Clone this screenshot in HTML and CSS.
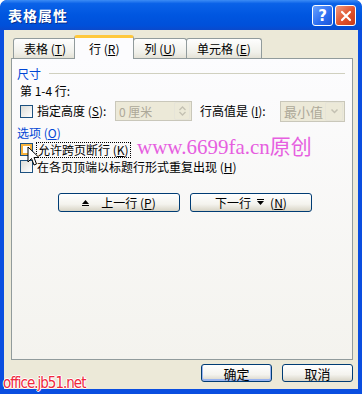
FILE: index.html
```html
<!DOCTYPE html>
<html lang="zh-CN">
<head>
    <meta charset="UTF-8">
    <title>表格属性</title>
    <link rel="stylesheet" href="styles.css">
</head>
<body>
    <div class="window">
        <div class="titlebar">
            <span class="title">表格属性</span>
            <div class="title-buttons">
                <span class="tb-btn tb-help">?</span>
                <span class="tb-btn tb-close">
                    <svg width="12" height="12" viewBox="0 0 12 12"><path d="M2 2 L10 10 M10 2 L2 10" stroke="#fff" stroke-width="2.2" stroke-linecap="round"/></svg>
                </span>
            </div>
        </div>
        <div class="client">
            <div class="tabs">
                <div class="tab">表格 (<u>T</u>)</div>
                <div class="tab active">行 (<u>R</u>)</div>
                <div class="tab">列 (<u>U</u>)</div>
                <div class="tab">单元格 (<u>E</u>)</div>
            </div>
            <div class="panel">
                <div class="group-title"><span>尺寸</span><span class="rule"></span></div>
                <div class="line indent">第 1-4 行:</div>
                <div class="line size-row">
                    <span class="check"></span>
                    <span class="label first">指定高度 (<u>S</u>):</span>
                    <span class="field">
                        <span class="field-text">0 厘米</span>
                        <span class="spin">
                            <svg width="9" height="12" viewBox="0 0 9 12"><path d="M1.5 5 L4.5 2 L7.5 5 M1.5 7 L4.5 10 L7.5 7" fill="none" stroke="#c3c0b2" stroke-width="1.3"/></svg>
                        </span>
                    </span>
                    <span class="label second">行高值是 (<u>I</u>):</span>
                    <span class="combo">
                        <span class="field-text">最小值</span>
                        <span class="drop">
                            <svg width="9" height="6" viewBox="0 0 9 6"><path d="M1.5 1.5 L4.5 4.5 L7.5 1.5" fill="none" stroke="#c3c0b2" stroke-width="1.5"/></svg>
                        </span>
                    </span>
                </div>
                <div class="group-title options"><span>选项 (<u>O</u>)</span></div>
                <div class="line check-row">
                    <span class="check hot"></span>
                    <span class="label focus">允许跨页断行 (<u>K</u>)</span>
                </div>
                <div class="line check-row">
                    <span class="check"></span>
                    <span class="label">在各页顶端以标题行形式重复出现 (<u>H</u>)</span>
                </div>
                <div class="nav-buttons">
                    <span class="btn nav">
                        <svg width="7" height="6" viewBox="0 0 7 6"><path d="M3.5 0 L7 4 L0 4 Z M0 5 H7 V6 H0 Z" fill="#000"/></svg>
                        <span>上一行 (<u>P</u>)</span>
                    </span>
                    <span class="btn nav">
                        <span>下一行</span>
                        <svg width="7" height="7" viewBox="0 0 7 7"><path d="M0 0 H7 V1 H0 Z M0 2 H7 L3.5 6 Z" fill="#000"/></svg>
                        <span>(<u>N</u>)</span>
                    </span>
                </div>
            </div>
            <div class="footer">
                <span class="btn ok">确定</span>
                <span class="btn">取消</span>
            </div>
        </div>
        <div class="watermark-site">www.6699fa.cn原创</div>
        <div class="watermark-office">office.jb51.net</div>
        <svg class="cursor" width="13" height="21" viewBox="0 0 13 21"><path d="M1 1 L1 16 L4.5 12.5 L7 19 L9.5 18 L7 11.5 L12 11.5 Z" fill="#fff" stroke="#000" stroke-width="1"/></svg>
    </div>
</body>
</html>
```
FILE: styles.css
```css
body {
    margin: 0;
    padding: 0;
    font-family: "Noto Sans CJK SC", "DejaVu Sans", sans-serif;
    font-size: 12px;
    color: #000;
    background: #fff;
}
.window {
    position: relative;
    width: 362px;
    height: 394px;
    box-sizing: border-box;
    background: #0a4ee0;
    border-radius: 7px 7px 0 0;
    padding: 0 4px 5px 4px;
    display: flex;
    flex-direction: column;
    overflow: hidden;
}
.titlebar {
    height: 30px;
    margin: 0 -4px;
    padding: 0 6px 0 8px;
    display: flex;
    align-items: center;
    justify-content: space-between;
    background: linear-gradient(#3c8cf5 0%, #0a62e8 12%, #0056e0 50%, #0050da 85%, #0a49cc 100%);
    border-radius: 7px 7px 0 0;
}
.title {
    color: #fff;
    font-weight: bold;
    font-size: 14px;
    letter-spacing: 1px;
    text-shadow: 1px 1px #0a2f8a;
}
.title-buttons {
    display: flex;
    gap: 2px;
    margin-top: 1px;
}
.tb-btn {
    width: 21px;
    height: 21px;
    box-sizing: border-box;
    border: 1px solid #fff;
    border-radius: 3px;
    display: flex;
    align-items: center;
    justify-content: center;
    color: #fff;
    font-family: "DejaVu Sans", sans-serif;
    font-weight: bold;
    font-size: 15px;
}
.tb-help {
    background: linear-gradient(135deg, #6aa2ff, #2a6cf0 60%, #1c55d8);
}
.tb-close {
    background: linear-gradient(135deg, #f09a80, #e0522c 55%, #c83a18);
}
.client {
    flex: 1;
    background: #ece9d8;
    padding: 5px 5px 0 7px;
    display: flex;
    flex-direction: column;
}
.tabs {
    display: flex;
    align-items: flex-end;
    height: 23px;
    position: relative;
    z-index: 1;
    padding-left: 2px;
}
.tab {
    height: 20px;
    box-sizing: border-box;
    padding: 0 10px;
    border: 1px solid #919b9c;
    border-bottom: none;
    border-radius: 3px 3px 0 0;
    background: linear-gradient(#fefefe, #f0f0ea 70%, #e4e2d6);
    display: flex;
    align-items: center;
    margin-right: -1px;
}
.tab.active {
    height: 24px;
    background: #fcfcfe;
    border-top: 3px solid #ffc83c;
    margin: 0 -1px 0 -2px;
    padding: 0 14px;
    position: relative;
    top: 1px;
}
.panel {
    height: 302px;
    box-sizing: border-box;
    border: 1px solid #919b9c;
    background: linear-gradient(#fcfcfe, #f4f3ee);
    padding: 5px 7px 0 5px;
}
.group-title {
    display: flex;
    align-items: center;
    color: #0046d5;
    height: 18px;
    gap: 8px;
}
.group-title .rule {
    flex: 1;
    border-top: 1px solid #d0d0bf;
    margin-top: 1px;
}
.group-title.options {
    margin-top: 1px;
}
.line {
    display: flex;
    align-items: center;
    padding-left: 3px;
}
.indent {
    height: 15px;
    margin-top: 1px;
}
.size-row {
    height: 22px;
    margin-top: 2px;
}
.check {
    width: 13px;
    height: 13px;
    box-sizing: border-box;
    border: 1px solid #1c5180;
    background: linear-gradient(135deg, #dcdcd7, #fff);
    margin-right: 4px;
    flex-shrink: 0;
}
.check.hot {
    border-color: #1c5180;
    background: #fff;
    box-shadow: inset 0 0 0 2px #f8b33c;
}
.label {
    white-space: nowrap;
    line-height: 14px;
}
.label.first {
    width: 78px;
}
.label.second {
    width: 80px;
}
.field {
    width: 77px;
    height: 20px;
    box-sizing: border-box;
    border: 1px solid #c9c7ba;
    background: #ece9d8;
    color: #aca899;
    display: flex;
    align-items: center;
    justify-content: space-between;
    margin-right: 8px;
}
.field-text {
    padding-left: 3px;
}
.spin {
    width: 14px;
    height: 16px;
    margin-right: 1px;
    border: 1px solid #e6e4d8;
    border-radius: 2px;
    display: flex;
    align-items: center;
    justify-content: center;
}
.combo {
    width: 65px;
    height: 21px;
    box-sizing: border-box;
    border: 1px solid #c9c7ba;
    background: #ece9d8;
    color: #aca899;
    display: flex;
    align-items: center;
    justify-content: space-between;
    font-size: 13px;
}
.drop {
    width: 16px;
    height: 17px;
    margin-right: 1px;
    border: 1px solid #e6e4d8;
    border-radius: 2px;
    display: flex;
    align-items: center;
    justify-content: center;
}
.check-row {
    height: 17px;
}
.label.focus {
    outline: 1px dotted #000;
    padding: 0 1px;
}
.nav-buttons {
    display: flex;
    gap: 10px;
    margin: 18px 0 0 41px;
}
.btn {
    height: 19px;
    box-sizing: border-box;
    border: 1px solid #003c74;
    border-radius: 3px;
    background: linear-gradient(#ffffff, #f4f3ee 60%, #d8d4c6);
    display: flex;
    align-items: center;
    justify-content: center;
    gap: 6px;
}
.btn.nav {
    width: 122px;
    gap: 12px;
}
.btn.nav:last-child {
    gap: 6px;
}
.footer {
    display: flex;
    justify-content: flex-end;
    gap: 10px;
    padding-top: 4px;
}
.footer .btn {
    width: 71px;
    height: 18px;
    font-size: 13px;
}
.footer .btn.ok {
    box-shadow: inset 0 -1px 0 1px #9ab4ef;
}
.watermark-site {
    position: absolute;
    left: 137px;
    top: 138px;
    color: #e65fe0;
    font-family: "Liberation Serif", "Noto Sans CJK SC", serif;
    font-size: 21px;
    line-height: 19px;
    white-space: nowrap;
}
.watermark-office {
    position: absolute;
    left: 3px;
    top: 374px;
    color: #f0283c;
    font-family: "DejaVu Sans Condensed", "DejaVu Sans", sans-serif;
    font-size: 15px;
    letter-spacing: -1px;
    text-shadow: 1px 0 #fff, -1px 0 #fff, 0 1px #fff, 0 -1px #fff;
}
.cursor {
    position: absolute;
    left: 27px;
    top: 146px;
}
```
